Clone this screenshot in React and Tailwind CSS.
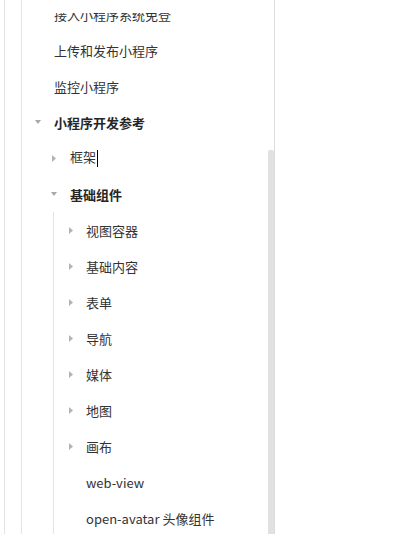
import React from 'react'

const FONT = { fontFamily: '"Microsoft YaHei", "Noto Sans CJK SC", "Noto Sans", sans-serif' }

function Caret({ open }) {
  if (open) {
    return (
      <svg width="6" height="4" viewBox="0 0 6 4" className="shrink-0">
        <path d="M0 0 L6 0 L3 4 Z" fill="#a8a8a8" />
      </svg>
    )
  }
  return (
    <svg width="4" height="7" viewBox="0 0 4 7" className="shrink-0">
      <path d="M0 0 L4 3.5 L0 7 Z" fill="#b4b4b4" />
    </svg>
  )
}

// 一行菜单：indent = 文本左边距，arrow = null | 'open' | 'closed'
function Row({ indent, arrowAt, arrow, bold, children }) {
  return (
    <div className="flex h-9 items-center" style={{ paddingLeft: indent }}>
      {arrow && (
        <span className="absolute flex items-center" style={{ marginLeft: arrowAt - indent }}>
          <Caret open={arrow === 'open'} />
        </span>
      )}
      <span className={`text-[13px] leading-none ${bold ? 'font-bold text-[#262626]' : 'text-[#333]'}`}>
        {children}
      </span>
    </div>
  )
}

const components = [
  { label: '视图容器', arrow: 'closed' },
  { label: '基础内容', arrow: 'closed' },
  { label: '表单', arrow: 'closed' },
  { label: '导航', arrow: 'closed' },
  { label: '媒体', arrow: 'closed' },
  { label: '地图', arrow: 'closed' },
  { label: '画布', arrow: 'closed' },
  { label: 'web-view' },
  { label: 'open-avatar 头像组件' },
]

export default function App() {
  return (
    <div className="h-[534px] w-[397px] overflow-hidden bg-white" style={FONT}>
      <div className="flex h-full w-[275px] border-r border-[#dcdcdc]">
        <div className="ml-1 flex-1 border-l border-[#e3e3e3]">
          <div className="relative ml-4 flex h-full flex-col border-l border-[#e3e3e3]">
            <div className="-mt-[4px]">
              <Row indent={32}>接入小程序系统免登</Row>
              <Row indent={32}>上传和发布小程序</Row>
              <Row indent={32}>监控小程序</Row>
              <Row indent={32} arrowAt={13} arrow="open" bold>小程序开发参考</Row>
              <Row indent={48} arrowAt={30} arrow="closed">
                框架<span className="ml-px inline-block h-[17px] w-px bg-black align-middle" />
              </Row>
              <Row indent={48} arrowAt={29} arrow="open" bold>基础组件</Row>
              <div className="ml-[31px] border-l border-[#e3e3e3]">
                {components.map((c) => (
                  <Row key={c.label} indent={32} arrowAt={15} arrow={c.arrow}>
                    {c.label}
                  </Row>
                ))}
              </div>
            </div>
            {/* 顶部遮挡：滚动内容被上方区域盖住 */}
            <div className="absolute left-0 right-0 top-0 z-20 h-[13px] bg-white" />
          </div>
        </div>
        <div className="flex w-[6px] flex-col">
          <div className="mt-[150px] flex-1 rounded-t-[2px] bg-[#e1e1e1]" />
        </div>
      </div>
    </div>
  )
}
